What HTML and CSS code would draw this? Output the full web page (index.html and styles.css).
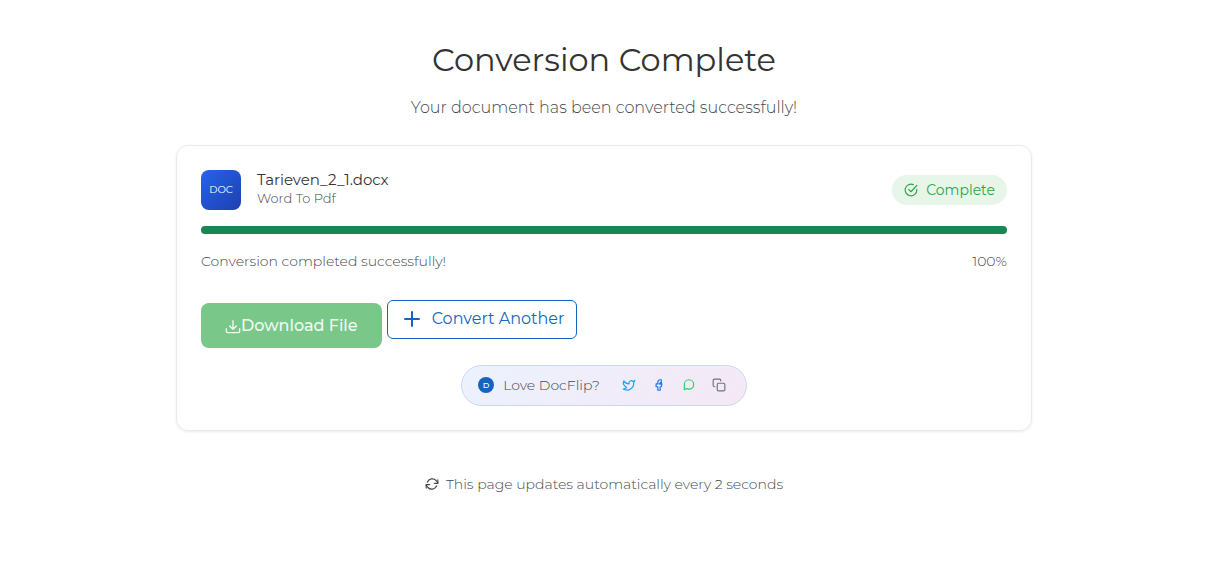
FILE: index.html
```
<!DOCTYPE html>
<html lang="en">
<head>
    <meta charset="UTF-8">
    <meta name="viewport" content="width=device-width, initial-scale=1.0">
    <title>Conversion Complete - DocFlip</title>
    <link rel="stylesheet" href="styles.css">
</head>
<body>
    <main class="container">
        <header class="page-header">
            <h1>Conversion Complete</h1>
            <p>Your document has been converted successfully!</p>
        </header>

        <section class="card">
            <div class="file-row">
                <div class="file-icon">DOC</div>
                <div class="file-info">
                    <div class="file-name">Tarieven_2_1.docx</div>
                    <div class="file-type">Word To Pdf</div>
                </div>
                <div class="status">
                    <svg class="icon" width="14" height="14" viewBox="0 0 24 24"><path d="M22 11v1a10 10 0 1 1-6-9.200"/><path d="m8 11 4 4L22 4"/></svg>
                    <span>Complete</span>
                </div>
            </div>

            <div class="progress" role="progressbar" aria-label="Conversion progress" aria-valuenow="100" aria-valuemin="0" aria-valuemax="100">
                <div class="progress-bar" style="width: 100%"></div>
            </div>
            <div class="progress-text">
                <span>Conversion completed successfully!</span>
                <span>100%</span>
            </div>

            <div class="actions">
                <button type="button" class="btn btn-download">
                    <svg class="icon" width="16" height="16" viewBox="0 0 24 24"><path d="M22 16v4a2 2 0 0 1-2 2H4a2 2 0 0 1-2-2v-4"/><path d="m7 12 5 5 5-5M12 4v13"/></svg>
                    <span>Download File</span>
                </button>
                <a href="#" class="btn btn-another">
                    <svg class="icon" width="24" height="24" viewBox="0 0 24 24"><path d="M12 5v14M5 12h14"/></svg>
                    <span>Convert Another</span>
                </a>
            </div>

            <div class="share">
                <span class="share-logo">D</span>
                <span class="share-label">Love DocFlip?</span>
                <div class="share-links">
                    <a href="#" class="twitter" aria-label="Share on Twitter">
                        <svg class="icon" width="14" height="14" viewBox="0 0 24 24"><path d="M22 4s-1 3-2 4c1 9-9 16-18 11 2 0 5-1 6-3C3 14 1 9 3 5c2 3 5 5 9 5-1-5 4-7 7-4 1 0 3-2 3-2z"/></svg>
                    </a>
                    <a href="#" class="facebook" aria-label="Share on Facebook">
                        <svg class="icon" width="14" height="14" viewBox="0 0 24 24"><path d="M16 3h-2a4 4 0 0 0-4 4v3H7v5h3v6h4v-6h2l1-5h-3V8h2z"/><path d="M12 10h4"/></svg>
                    </a>
                    <a href="#" class="whatsapp" aria-label="Share on WhatsApp">
                        <svg class="icon" width="14" height="14" viewBox="0 0 24 24"><path d="M4 20v-9a8 8 0 1 1 8 8c-2 0-3 0-4-1z"/></svg>
                    </a>
                    <button type="button" class="copy" aria-label="Copy link">
                        <svg class="icon" width="14" height="14" viewBox="0 0 24 24"><rect x="9" y="9" width="13" height="13" rx="2"/><path d="M5 15H4a2 2 0 0 1-2-2V4a2 2 0 0 1 2-2h9a2 2 0 0 1 2 2v1"/></svg>
                    </button>
                </div>
            </div>
        </section>

        <p class="auto-update">
            <svg class="icon" width="14" height="14" viewBox="0 0 24 24"><path d="M22 5v6h-6M2 19v-6h6"/><path d="M4 9a9 9 0 0 1 15-3l3 4M2 14l3 4a9 9 0 0 0 15-3"/></svg>
            <span>This page updates automatically every 2 seconds</span>
        </p>
    </main>
</body>
</html>
```
FILE: styles.css
```
* {
    box-sizing: border-box;
}
body {
    margin: 0;
    padding: 40px 10px 0 0;
    font-family: Montserrat, Inter, sans-serif;
    font-weight: 300;
    font-size: 14px;
    line-height: 20px;
    color: #45494e;
    background: #fff;
}
.container {
    max-width: 856px;
    margin: 0 auto;
}
.icon {
    display: block;
    flex-shrink: 0;
    fill: none;
    stroke: currentColor;
    stroke-width: 2;
    stroke-linecap: round;
    stroke-linejoin: round;
}
.page-header {
    text-align: center;
}
.page-header h1 {
    margin: 0 0 16px;
    font-size: 32px;
    line-height: 40px;
    font-weight: 400;
    color: #333;
}
.page-header p {
    margin: 0 0 25px;
    font-size: 16px;
    line-height: 24px;
}
.card {
    padding: 24px;
    border: 1px solid #e8eaed;
    border-radius: 12px;
    box-shadow: 0 1px 3px rgba(0, 0, 0, 0.08);
}
.file-row {
    display: flex;
    align-items: center;
    gap: 16px;
    margin-bottom: 16px;
}
.file-icon {
    display: flex;
    align-items: center;
    justify-content: center;
    width: 40px;
    height: 40px;
    border-radius: 8px;
    background: linear-gradient(135deg, #2563eb, #1e40af);
    color: #fff;
    font-size: 10px;
    font-weight: 400;
}
.file-info {
    flex: 1;
    align-self: flex-start;
}
.file-name {
    font-size: 15px;
    line-height: 20px;
    font-weight: 400;
    color: #333;
}
.file-type {
    font-size: 13px;
    line-height: 16px;
}
.status {
    display: flex;
    align-items: center;
    gap: 8px;
    padding: 5px 12px;
    border-radius: 20px;
    background: #e8f5e9;
    color: #28a745;
    font-weight: 400;
}
.progress {
    height: 8px;
    border-radius: 4px;
    overflow: hidden;
    background: #e8eaed;
}
.progress-bar {
    height: 100%;
    background: #198754;
}
.progress-text {
    display: flex;
    justify-content: space-between;
    margin: 17px 0 29px;
}
.actions {
    display: flex;
    align-items: flex-start;
    gap: 5px;
    margin-bottom: 17px;
}
.btn {
    display: flex;
    align-items: center;
    font-family: inherit;
    font-size: 16px;
    text-decoration: none;
    cursor: pointer;
}
.btn-download {
    margin-top: 3px;
    padding: 0 24px;
    height: 45px;
    border: none;
    border-radius: 8px;
    background: #79c88a;
    color: #f1faf3;
    font-weight: 500;
}
.btn-another {
    gap: 8px;
    padding: 0 12px 2px;
    height: 39px;
    border: 1px solid #1565c0;
    border-radius: 6px;
    color: #1565c0;
    font-weight: 400;
}
.share {
    display: flex;
    align-items: center;
    width: fit-content;
    height: 41px;
    margin: 0 auto;
    padding: 0 20px 2px 16px;
    border: 1px solid #c9d8f8;
    border-radius: 24px;
    background: linear-gradient(135deg, #ebf2fe, #f5e8f5);
}
.share-logo {
    display: flex;
    align-items: center;
    justify-content: center;
    width: 16px;
    height: 16px;
    margin-right: 9px;
    border-radius: 50%;
    background: #1565c0;
    color: #fff;
    font-size: 8px;
    font-weight: 500;
}
.share-links {
    display: flex;
    gap: 16px;
    margin-left: 22px;
}
.share-links button {
    padding: 0;
    border: none;
    background: none;
    cursor: pointer;
}
.share-links .twitter {
    color: #1da1f2;
}
.share-links .facebook {
    color: #1877f2;
}
.share-links .whatsapp {
    color: #25d366;
}
.share-links .copy {
    color: #6c757d;
}
.auto-update {
    display: flex;
    align-items: center;
    justify-content: center;
    gap: 7px;
    margin: 43px 0 0;
}
```
